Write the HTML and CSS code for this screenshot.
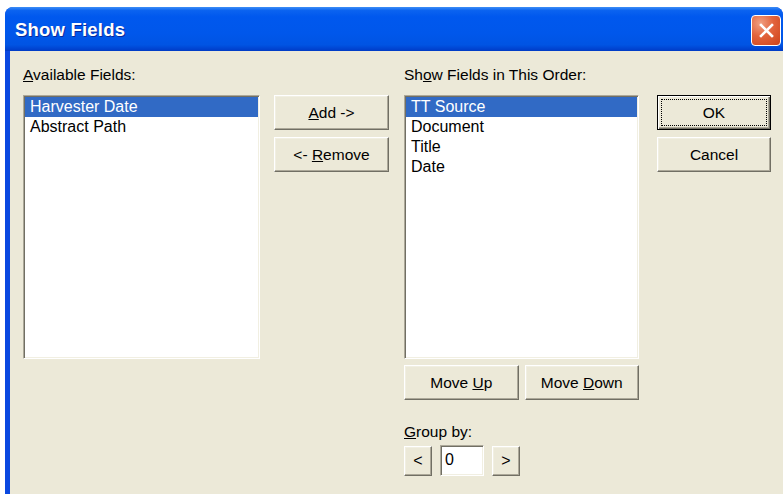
FILE: index.html
```html
<!DOCTYPE html>
<html>
<head>
<meta charset="utf-8">
<title>Show Fields</title>
<link rel="stylesheet" href="styles.css">
</head>
<body>
<div class="window">
  <div class="titlebar">
    <span class="title">Show Fields</span>
    <button class="close" aria-label="Close">
      <svg width="17" height="17" viewBox="0 0 17 17"><path d="M3 3 L14 14 M14 3 L3 14" stroke="#fff" stroke-width="2.6" stroke-linecap="square"/></svg>
    </button>
  </div>
  <div class="client">
    <div class="col col-avail">
      <div class="label"><u>A</u>vailable Fields:</div>
      <ul class="listbox">
        <li class="sel">Harvester Date</li>
        <li>Abstract Path</li>
      </ul>
    </div>
    <div class="col col-move">
      <button class="btn"><span><u>A</u>dd -&gt;</span></button>
      <button class="btn"><span>&lt;- <u>R</u>emove</span></button>
    </div>
    <div class="col col-order">
      <div class="label">Sh<u>o</u>w Fields in This Order:</div>
      <ul class="listbox">
        <li class="sel">TT Source</li>
        <li>Document</li>
        <li>Title</li>
        <li>Date</li>
      </ul>
      <div class="row-btns">
        <button class="btn"><span>Move <u>U</u>p</span></button>
        <button class="btn"><span>Move <u>D</u>own</span></button>
      </div>
      <div class="label group-label"><u>G</u>roup by:</div>
      <div class="spinner">
        <button class="btn spin"><span>&lt;</span></button>
        <div class="field">0</div>
        <button class="btn spin"><span>&gt;</span></button>
      </div>
    </div>
    <div class="col col-ok">
      <button class="btn default"><span class="focus">OK</span></button>
      <button class="btn"><span>Cancel</span></button>
    </div>
  </div>
</div>
</body>
</html>
```

FILE: styles.css
```css
html, body {
  margin: 0;
  padding: 0;
  background: #ffffff;
  overflow: hidden;
  height: 494px;
}

body {
  font-family: "Liberation Sans", Arial, sans-serif;
  font-size: 15.5px;
  color: #000;
}

.window {
  margin: 7px 0 0 5px;
  width: 778px;
  height: 487px;
  display: flex;
  flex-direction: column;
  border-radius: 8px 8px 0 0;
  background: #0A48E0;
  overflow: hidden;
}

.titlebar {
  height: 44px;
  flex: none;
  display: flex;
  align-items: center;
  justify-content: space-between;
  padding: 0 2px 0 10px;
  background: linear-gradient(#3D8EF6 0%, #0B63F0 8%, #0058EE 22%, #0057EB 60%, #0054E3 86%, #0042CF 96%, #003BC4 100%);
}

.title {
  color: #fff;
  font-weight: bold;
  font-size: 18.5px;
  letter-spacing: 0.2px;
  text-shadow: 1px 1px #0A2A9A;
  margin-top: 1px;
}

.close {
  width: 30px;
  height: 31px;
  margin-top: 2px;
  padding: 0;
  border: 1px solid #fff;
  border-radius: 4px;
  background: radial-gradient(circle at 30% 25%, #F0A083 0%, #E2633C 45%, #CE4219 100%);
  display: flex;
  align-items: center;
  justify-content: center;
}

.client {
  flex: 1;
  margin-left: 5px;
  background: #ECE9D8;
  display: flex;
  align-items: flex-start;
  padding: 15px 0 0 13px;
}

.col {
  display: flex;
  flex-direction: column;
  flex: none;
}

.col-avail { width: 237px; }
.col-move { width: 115px; margin-left: 14px; padding-top: 29px; gap: 7px; }
.col-order { width: 235px; margin-left: 15px; }
.col-ok { width: 114px; margin-left: 18px; padding-top: 29px; gap: 7px; }

.label {
  height: 18px;
  line-height: 18px;
  margin-bottom: 11px;
  white-space: nowrap;
}

.listbox {
  list-style: none;
  margin: 0;
  padding: 0;
  height: 264px;
  box-sizing: border-box;
  background: #fff;
  border: 1px solid;
  border-color: #ACA899 #FFFFFF #FFFFFF #ACA899;
  box-shadow: inset 1px 1px #716F64, inset -1px -1px #F1EFE2;
  padding: 1px;
}

.listbox li {
  height: 20px;
  line-height: 20px;
  font-size: 16px;
  padding-left: 5px;
  white-space: nowrap;
}

.listbox li.sel {
  background: #316AC5;
  color: #fff;
}

.btn {
  box-sizing: border-box;
  height: 35px;
  width: 100%;
  padding: 0;
  font: inherit;
  color: #000;
  background: #ECE9D8;
  border: 1px solid;
  border-color: #FFFFFF #716F64 #716F64 #FFFFFF;
  box-shadow: inset -1px -1px #ACA899, inset 1px 1px #F1EFE2;
  display: flex;
  align-items: center;
  justify-content: center;
}

.btn.default {
  border: 1px solid #000;
  box-shadow: inset 1px 1px #fff, inset -1px -1px #716F64, inset -2px -2px #ACA899;
  padding: 3px;
}

.btn .focus {
  flex: 1;
  align-self: stretch;
  border: 1px dotted #000;
  display: flex;
  align-items: center;
  justify-content: center;
}

.row-btns {
  display: flex;
  gap: 6px;
  margin-top: 6px;
}

.row-btns .btn {
  width: 115px;
}

.group-label {
  margin-top: 23px;
  margin-bottom: 4px;
}

.spinner {
  display: flex;
  align-items: center;
  gap: 8px;
}

.btn.spin {
  width: 28px;
  height: 30px;
  font-size: 16px;
}

.field {
  box-sizing: border-box;
  width: 44px;
  height: 31px;
  background: #fff;
  border: 1px solid;
  border-color: #ACA899 #FFFFFF #FFFFFF #ACA899;
  box-shadow: inset 1px 1px #716F64, inset -1px -1px #F1EFE2;
  padding-left: 4px;
  line-height: 27px;
  font-size: 16px;
}
```
